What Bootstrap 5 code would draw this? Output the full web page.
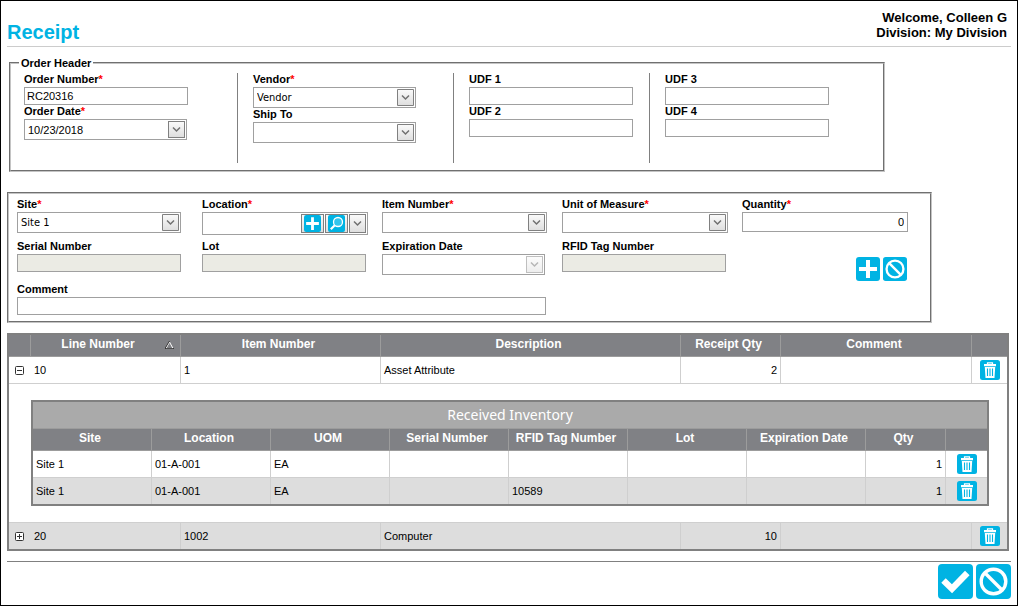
<!DOCTYPE html>
<html lang="en">
<head>
<meta charset="utf-8">
<meta name="viewport" content="width=device-width, initial-scale=1">
<title>Receipt</title>
<link href="https://cdn.jsdelivr.net/npm/bootstrap@5.3.0/dist/css/bootstrap.min.css" rel="stylesheet">
<style>
:root { --brand: #00b3e3; --head: #808185; --rule: #cfcfcf; }
body { font: 11px/14px "Liberation Sans", Arial, sans-serif; color: #000; background: #fff; }
.page { border: 1px solid #000; padding: 0 6px 4px; min-height: 100vh; }
.page-head { height: 46px; border-bottom: 1px solid #ccc; }
.page-head h1 { font-size: 20px; line-height: 24px; font-weight: 700; color: var(--brand); margin: 0; }
.user-info { font-size: 13px; line-height: 15px; font-weight: 700; padding: 9px 4px 0 0; text-align: right; }

fieldset { border: 2px groove #c4c4c4; }
.order-box { max-width: 876px; margin: 8px 0 0 2px; padding: 2px 0 7px; }
.order-box legend { float: none; width: auto; margin: 0 0 0 8px; padding: 0 2px; font-size: 11px; line-height: 16px; font-weight: 700; }
.order-grid { display: grid; grid-template-columns: 227fr 216fr 196fr 233fr; min-height: 90px; }
.order-grid > div { padding-left: 15px; border-right: 1px solid #808080; }
.order-grid > div:first-child { padding-left: 13px; }
.order-grid > div:last-child { border-right: 0; }
.line-box { max-width: 925px; margin-top: 20px; padding: 4px 8px 6px; }
.line-grid { display: grid; grid-template-columns: 185fr 180fr 180fr 180fr 180fr; row-gap: 5px; }
.line-tools { grid-row: 2 / span 2; grid-column: 5; align-self: start; gap: 3px; margin: 17px 15px 0 0; }
.comment-cell { grid-column: 1 / span 3; padding: 3px 16px 0 0; }

label { display: block; font-weight: 700; line-height: 12px; padding-bottom: 2px; }
label i { color: #f00; font-style: normal; }
.txt, .pick, .combo { display: block; width: 164px; max-width: 100%; height: 18px; border: 1px solid #a0a0a0; border-radius: 0; background: #fff; padding: 0 2px; color: #000; }
.txt:disabled { background: #ebebe4; }
.txt.wide { width: 100%; }
.txt.qty { width: 166px; height: 20px; text-align: right; padding-right: 3px; }
.pick, .combo { height: 21px; }
.pick { appearance: none; padding: 0 20px 0 3px; font-family: "DejaVu Sans Condensed", Tahoma, sans-serif;
  background: #fff url("data:image/svg+xml,%3Csvg xmlns='http://www.w3.org/2000/svg' width='17' height='17'%3E%3ClinearGradient id='g' x2='0' y2='1'%3E%3Cstop stop-color='%23fafafa'/%3E%3Cstop offset='1' stop-color='%23dedede'/%3E%3C/linearGradient%3E%3Cpath d='M.5.5h16v16H.5z' fill='url(%23g)' stroke='%23808080'/%3E%3Cpath d='M5 6.500l3.500 3.500L12 6.500' fill='none' stroke='%23707070' stroke-width='1.500'/%3E%3C/svg%3E") no-repeat right 1px top 1px; }
.pick.w-mid { width: 165px; }
.pick.w-big { width: 166px; }
.pick.vend { width: 163px; }
.combo { display: flex; gap: 1px; padding: 1px; width: 163px; }
.combo.loc { width: 166px; height: 23px; }
.combo input { flex: 1; min-width: 0; border: 0; padding: 0 2px; background: #fff; }
.combo button { width: 17px; padding: 0; border: 1px solid #808080; background: linear-gradient(#fafafa, #dedede); display: flex; align-items: center; justify-content: center; flex: none; }
.combo button.tool { width: 23px; }
.combo button:disabled { opacity: .5; }
.icon-btn { border: 0; padding: 0; background: none; display: block; line-height: 0; }

.grid { width: 100%; table-layout: fixed; border-collapse: separate; border-spacing: 0; border: 2px solid #808080; }
.grid th, .grid td { border-right: 1px solid var(--rule); border-bottom: 1px solid var(--rule); padding: 0 3px; height: 27px; overflow: hidden; }
.grid th { background: var(--head); color: #fff; font-size: 12px; text-align: center; border-color: #9c9c9c; height: 22px; padding: 0 4px 4px 0; white-space: nowrap; }
.grid tr > :last-child { border-right: 0; }
.grid > tbody > tr:last-child > td { border-bottom: 0; height: 26px; }
.grid tr.alt > td { background: #ddd; }
.grid td.num { text-align: right; }
.grid td.act { padding: 0; }
.grid td.act .icon-btn { margin: 0 auto; }
.grid td.exp .icon-btn { margin-left: 3px; }
.grid td.sub { padding: 16px 18px 16px 22px; }
.grid .cap th { background: #aaa; font: 14px/20px "Noto Sans", Tahoma, sans-serif; height: 27px; padding: 0; }
.sort { margin: 2px 2px 0 0; }
.main-wrap { margin: 10px 2px 0 0; }
.page-foot { margin-top: 10px; padding-top: 2px; border-top: 1px solid #808080; gap: 3px; }
</style>
</head>
<body>
<svg width="0" height="0" class="position-absolute" aria-hidden="true">
  <symbol id="plus" viewBox="0 0 24 24"><rect width="24" height="24" rx="3" fill="#00b3e3"/><path d="M12 3v18M3 12h18" stroke="#fff" stroke-width="4"/></symbol>
  <symbol id="ban" viewBox="0 0 35 35"><rect width="35" height="35" rx="4" fill="#00b3e3"/><circle cx="17.500" cy="17.500" r="12.300" fill="none" stroke="#fff" stroke-width="3.400"/><path d="M9 9l17 17" stroke="#fff" stroke-width="3.400"/></symbol>
  <symbol id="check" viewBox="0 0 35 35"><rect width="35" height="35" rx="4" fill="#00b3e3"/><path d="M5.500 16.500l8.500 8.200L29.300 9" fill="none" stroke="#fff" stroke-width="6.400"/></symbol>
  <symbol id="trash" viewBox="0 0 20 20"><rect width="20" height="20" rx="2.500" fill="#00b3e3"/><path d="M7.500 4V2.800h5V4" fill="none" stroke="#fff" stroke-width="1.200"/><path d="M4 4h12v2.200H4zM4.800 7h10.400l-.7 11H5.500z" fill="#fff"/><path d="M7.500 8.500v7.500M10 8.500v7.500M12.500 8.500v7.500" stroke="#00b3e3" stroke-width="1.100"/></symbol>
  <symbol id="find" viewBox="0 0 17 17"><rect width="17" height="17" rx="2" fill="#00b3e3"/><circle cx="10" cy="7" r="4.500" fill="#33c5ec" stroke="#fff" stroke-width="1.300"/><path d="M6.800 10.300l-4 4" stroke="#fff" stroke-width="2.200"/></symbol>
  <symbol id="down" viewBox="0 0 9 7"><path d="M1 1.500L4.500 5 8 1.500" fill="none" stroke="#707070" stroke-width="1.500"/></symbol>
</svg>
<main class="page">
  <header class="page-head d-flex justify-content-between">
    <h1 class="align-self-center pt-3">Receipt</h1>
    <div class="user-info">Welcome, Colleen G<br>Division: My Division</div>
  </header>

  <fieldset class="order-box">
    <legend>Order Header</legend>
    <div class="order-grid">
      <div>
        <label for="onum">Order Number<i>*</i></label>
        <input class="txt" id="onum" value="RC20316">
        <label for="odate">Order Date<i>*</i></label>
        <div class="combo"><input id="odate" value="10/23/2018"><button type="button" aria-label="Choose order date"><svg width="9" height="7"><use href="#down"/></svg></button></div>
      </div>
      <div>
        <label for="vendor">Vendor<i>*</i></label>
        <select class="pick vend" id="vendor"><option>Vendor</option></select>
        <label for="ship">Ship To</label>
        <select class="pick vend" id="ship"><option></option></select>
      </div>
      <div>
        <label for="u1">UDF 1</label><input class="txt" id="u1">
        <label for="u2">UDF 2</label><input class="txt" id="u2">
      </div>
      <div>
        <label for="u3">UDF 3</label><input class="txt" id="u3">
        <label for="u4">UDF 4</label><input class="txt" id="u4">
      </div>
    </div>
  </fieldset>

  <fieldset class="line-box">
    <div class="line-grid">
      <div><label for="site">Site<i>*</i></label><select class="pick" id="site"><option>Site 1</option></select></div>
      <div><label for="loc">Location<i>*</i></label>
        <div class="combo loc"><input id="loc">
          <button type="button" class="tool" aria-label="Add location"><svg width="17" height="17"><use href="#plus"/></svg></button>
          <button type="button" class="tool" aria-label="Find location"><svg width="17" height="17"><use href="#find"/></svg></button>
          <button type="button" aria-label="Choose location"><svg width="9" height="7"><use href="#down"/></svg></button></div></div>
      <div><label for="item">Item Number<i>*</i></label><select class="pick w-mid" id="item"><option></option></select></div>
      <div><label for="uom">Unit of Measure<i>*</i></label><select class="pick w-big" id="uom"><option></option></select></div>
      <div><label for="qty">Quantity<i>*</i></label><input class="txt qty" id="qty" value="0"></div>
      <div><label for="serial">Serial Number</label><input class="txt" id="serial" disabled></div>
      <div><label for="lot">Lot</label><input class="txt" id="lot" disabled></div>
      <div><label for="expd">Expiration Date</label>
        <div class="combo"><input id="expd" disabled><button type="button" disabled aria-label="Choose expiration date"><svg width="9" height="7"><use href="#down"/></svg></button></div></div>
      <div><label for="rfid">RFID Tag Number</label><input class="txt" id="rfid" disabled></div>
      <div class="line-tools d-flex justify-content-end">
        <button type="button" class="icon-btn" aria-label="Add line"><svg width="24" height="24"><use href="#plus"/></svg></button>
        <button type="button" class="icon-btn" aria-label="Clear line"><svg width="24" height="24"><use href="#ban"/></svg></button>
      </div>
      <div class="comment-cell"><label for="comment">Comment</label><input class="txt wide" id="comment"></div>
    </div>
  </fieldset>

  <div class="main-wrap">
    <table class="grid">
      <colgroup><col style="width:22px"><col style="width:150px"><col style="width:200px"><col style="width:300px"><col style="width:100px"><col style="width:191px"><col style="width:35px"></colgroup>
      <thead><tr>
        <th></th>
        <th><div class="d-flex align-items-center"><span class="flex-grow-1">Line Number</span><svg class="sort" width="9" height="8"><path d="M4.500 1L8 7.500H1z" fill="#808185" stroke="#fff"/><path d="M4.500 0L0 7.500h9" fill="none" stroke="#222" stroke-width=".8"/></svg></div></th>
        <th>Item Number</th><th>Description</th><th>Receipt Qty</th><th>Comment</th><th></th>
      </tr></thead>
      <tbody>
        <tr>
          <td class="exp border-end-0"><button type="button" class="icon-btn" aria-label="Collapse line 10"><svg width="9" height="9"><rect x=".5" y=".5" width="8" height="8" rx="1" fill="#fff" stroke="#333"/><path d="M2 4.500h5" stroke="#333"/></svg></button></td>
          <td>10</td><td>1</td><td>Asset Attribute</td><td class="num">2</td><td></td>
          <td class="act"><button type="button" class="icon-btn" aria-label="Delete line 10"><svg width="20" height="20"><use href="#trash"/></svg></button></td>
        </tr>
        <tr>
          <td colspan="7" class="sub">
            <table class="grid">
              <colgroup><col span="7" style="width:119px"><col style="width:80px"><col style="width:41px"></colgroup>
              <thead>
                <tr class="cap"><th colspan="9">Received Inventory</th></tr>
                <tr><th>Site</th><th>Location</th><th>UOM</th><th>Serial Number</th><th>RFID Tag Number</th><th>Lot</th><th>Expiration Date</th><th>Qty</th><th></th></tr>
              </thead>
              <tbody>
                <tr><td>Site 1</td><td>01-A-001</td><td>EA</td><td></td><td></td><td></td><td></td><td class="num">1</td>
                  <td class="act"><button type="button" class="icon-btn" aria-label="Delete item 1"><svg width="20" height="20"><use href="#trash"/></svg></button></td></tr>
                <tr class="alt"><td>Site 1</td><td>01-A-001</td><td>EA</td><td></td><td>10589</td><td></td><td></td><td class="num">1</td>
                  <td class="act"><button type="button" class="icon-btn" aria-label="Delete item 2"><svg width="20" height="20"><use href="#trash"/></svg></button></td></tr>
              </tbody>
            </table>
          </td>
        </tr>
        <tr class="alt">
          <td class="exp border-end-0"><button type="button" class="icon-btn" aria-label="Expand line 20"><svg width="9" height="9"><rect x=".5" y=".5" width="8" height="8" rx="1" fill="#fff" stroke="#333"/><path d="M2 4.500h5M4.500 2v5" stroke="#333"/></svg></button></td>
          <td>20</td><td>1002</td><td>Computer</td><td class="num">10</td><td></td>
          <td class="act"><button type="button" class="icon-btn" aria-label="Delete line 20"><svg width="20" height="20"><use href="#trash"/></svg></button></td>
        </tr>
      </tbody>
    </table>
  </div>

  <footer class="page-foot d-flex justify-content-end">
    <button type="button" class="icon-btn" aria-label="Save"><svg width="35" height="35"><use href="#check"/></svg></button>
    <button type="button" class="icon-btn" aria-label="Cancel"><svg width="35" height="35"><use href="#ban"/></svg></button>
  </footer>
</main>
<script src="https://cdn.jsdelivr.net/npm/bootstrap@5.3.0/dist/js/bootstrap.bundle.min.js"></script>
</body>
</html>
